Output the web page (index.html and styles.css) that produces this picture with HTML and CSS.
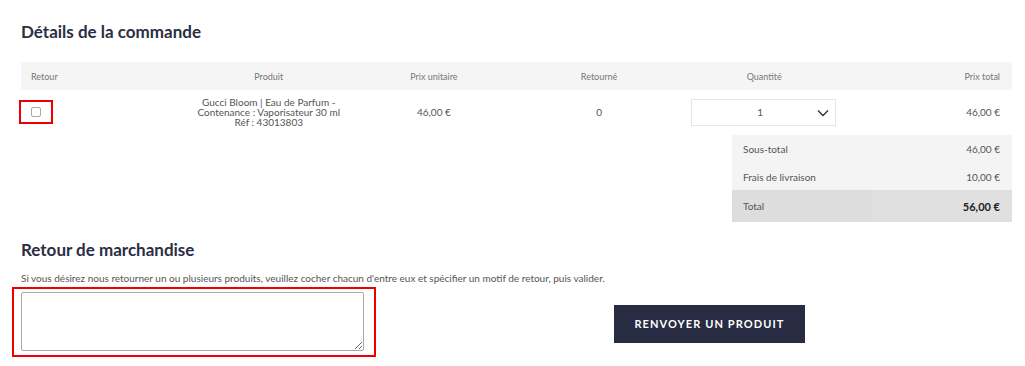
FILE: index.html
```html
<!DOCTYPE html>
<html lang="fr">
<head>
  <meta charset="UTF-8" />
  <title>Détails de la commande</title>
  <link rel="stylesheet" href="styles.css">
</head>
<body>
  <main class="page">
    <h2>Détails de la commande</h2>

    <table class="order-table">
      <thead>
        <tr>
          <th class="col-return">Retour</th>
          <th>Produit</th>
          <th>Prix unitaire</th>
          <th>Retourné</th>
          <th>Quantité</th>
          <th class="col-total">Prix total</th>
        </tr>
      </thead>
      <tbody>
        <tr>
          <td class="col-return"><span class="mark"><input type="checkbox" class="check" /></span></td>
          <td class="product">Gucci Bloom | Eau de Parfum -<br>Contenance : Vaporisateur 30 ml<br>Réf : 43013803</td>
          <td>46,00 €</td>
          <td>0</td>
          <td>
            <div class="qty">
              <span class="qty-value">1</span>
              <svg class="chevron" width="12" height="8" viewBox="0 0 12 8"><path d="M1 1.5 L6 6.5 L11 1.5" fill="none" stroke="#333" stroke-width="1.4"/></svg>
            </div>
          </td>
          <td class="col-total">46,00 €</td>
        </tr>
      </tbody>
    </table>

    <table class="summary">
      <tr><td>Sous-total</td><td class="amount">46,00 €</td></tr>
      <tr><td>Frais de livraison</td><td class="amount">10,00 €</td></tr>
      <tr class="grand"><td>Total</td><td class="amount">56,00 €</td></tr>
    </table>

    <h2 class="return-title">Retour de marchandise</h2>
    <p class="hint">Si vous désirez nous retourner un ou plusieurs produits, veuillez cocher chacun d'entre eux et spécifier un motif de retour, puis valider.</p>

    <form class="return-form">
      <div class="mark-box"><textarea></textarea></div>
      <button type="button" class="submit">Renvoyer un produit</button>
    </form>
  </main>
</body>
</html>
```

FILE: styles.css
```css
body { margin: 0; padding: 0; background: #fff; font-family: Lato, "Liberation Sans", sans-serif; color: #555; }
.page { padding: 0 13px 0 21px; }

h2 { margin: 0; font-size: 17px; font-weight: 700; color: #2b2e44; }
.page > h2:first-child { padding-top: 21px; height: 41px; }

.order-table { width: 100%; border-collapse: collapse; table-layout: fixed; }
.order-table th { background: #f5f5f5; height: 28px; padding: 0 10px; font-size: 9px; font-weight: 400; color: #777; text-align: center; }
.order-table td { height: 44px; padding: 0 10px; font-size: 10px; text-align: center; vertical-align: middle; }
.order-table .col-return { text-align: left; }
.order-table .col-total { text-align: right; padding-right: 12px; }
.product { line-height: 10px; padding-bottom: 1px; }

.mark { display: inline-block; padding: 5px 10px; margin: 0 -10px; outline: 2px solid #e00; line-height: 0; }
.check { -webkit-appearance: none; appearance: none; width: 10px; height: 10px; margin: 0; border: 1.5px solid #a8a8a8; border-radius: 2px; background: #fff; }

.qty { display: flex; align-items: center; justify-content: center; position: relative; width: 143px; height: 25px; margin-left: -1px; border: 1px solid #e6e6e6; }
.qty-value { margin-left: -6px; }
.chevron { position: absolute; right: 6px; top: 9px; }

.summary { width: 280px; margin: 1px 0 0 auto; border-collapse: collapse; background: #f4f4f4; font-size: 10px; }
.summary td { height: 27px; padding: 0 0 0 11px; width: 50%; }
.summary tr:first-child td { height: 28px; }
.summary .amount { text-align: right; padding: 0 12px 0 0; }
.summary .grand td { height: 32px; background: #dddddd; }
.summary .grand .amount { font-weight: 700; font-size: 11px; color: #222; background: #e0e0e0; }

.return-title { margin-top: 17px; }
.hint { margin: 12px 0 3px; font-size: 10px; }

.return-form { display: flex; align-items: center; }
.mark-box { border: 2px solid #e00; padding: 3px 10px 4px 7px; margin-left: -9px; line-height: 0; }
.mark-box textarea { width: 343px; height: 59px; margin: 0; box-sizing: border-box; border: 1px solid #aaa; border-radius: 2px; resize: both; }
.submit { margin: 3px 0 0 238px; width: 191px; height: 38px; border: none; background: #272c42; color: #fff; font-family: Lato, "Liberation Sans", sans-serif; font-weight: 700; font-size: 11px; letter-spacing: 1.1px; text-transform: uppercase; cursor: pointer; }
```
